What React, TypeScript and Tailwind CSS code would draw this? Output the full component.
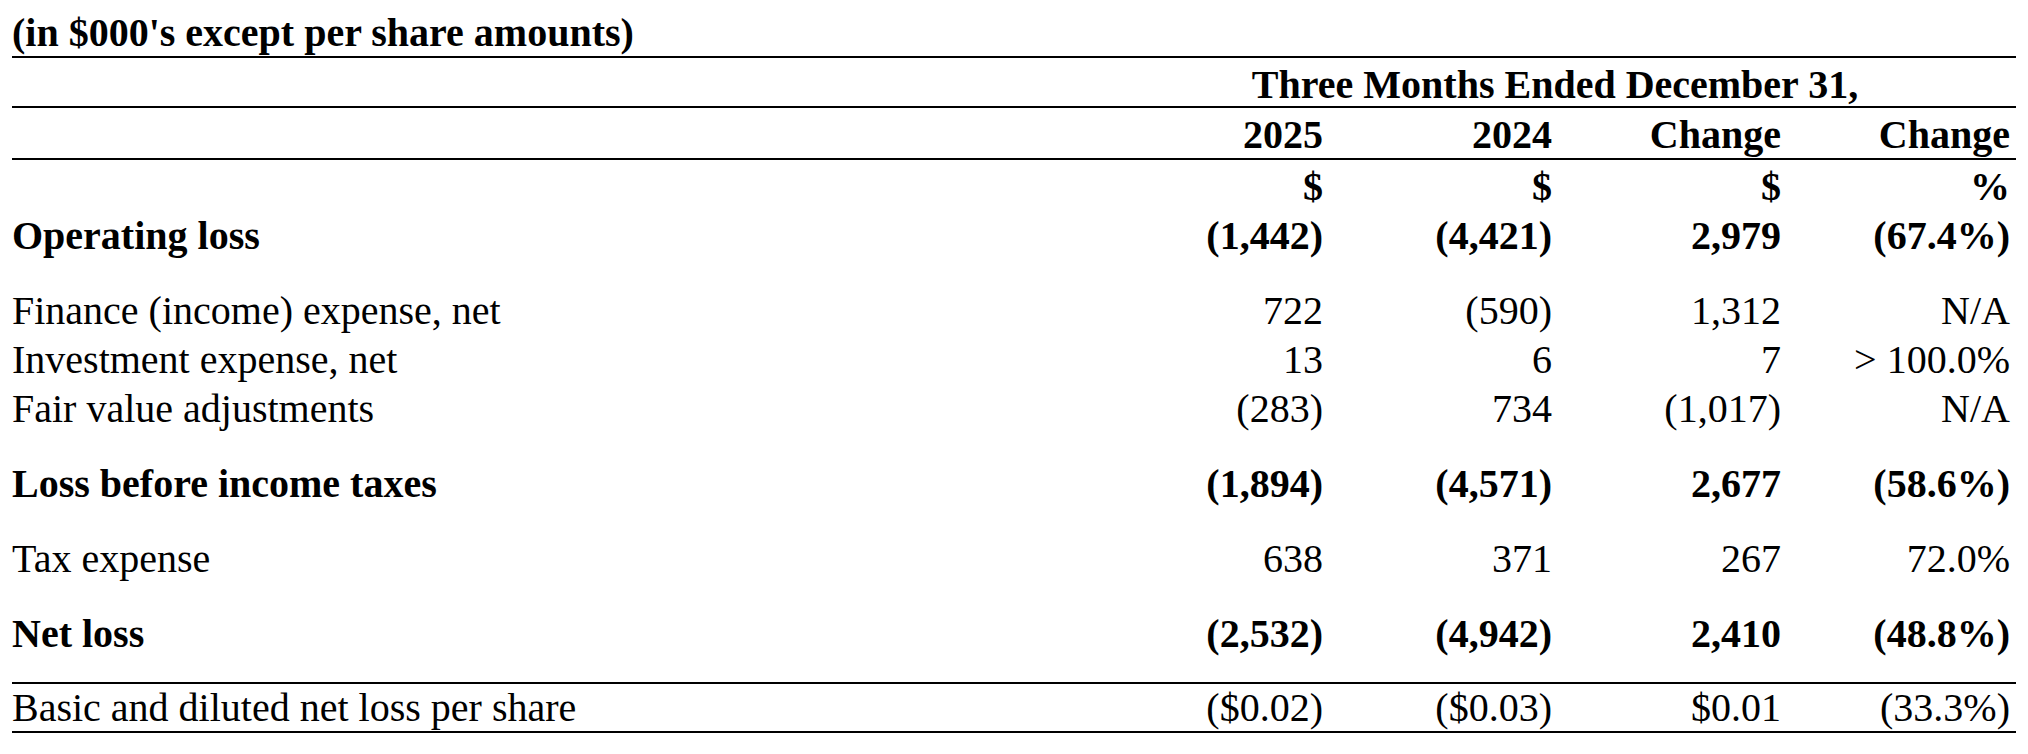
type Row = {
  label: string;
  values: string[];
  bold?: boolean;
  gapBefore?: boolean;
};

const rows: Row[] = [
  { label: "", values: ["$", "$", "$", "%"], bold: true },
  { label: "Operating loss", values: ["(1,442)", "(4,421)", "2,979", "(67.4%)"], bold: true },
  { label: "Finance (income) expense, net", values: ["722", "(590)", "1,312", "N/A"], gapBefore: true },
  { label: "Investment expense, net", values: ["13", "6", "7", "> 100.0%"] },
  { label: "Fair value adjustments", values: ["(283)", "734", "(1,017)", "N/A"] },
  { label: "Loss before income taxes", values: ["(1,894)", "(4,571)", "2,677", "(58.6%)"], bold: true, gapBefore: true },
  { label: "Tax expense", values: ["638", "371", "267", "72.0%"], gapBefore: true },
  { label: "Net loss", values: ["(2,532)", "(4,942)", "2,410", "(48.8%)"], bold: true, gapBefore: true },
];

function Line({ children, bold, className = "" }: { children: React.ReactNode; bold?: boolean; className?: string }) {
  return (
    <div className={`grid grid-cols-[1fr_229px_229px_229px_229px] pr-[6px] ${bold ? "font-bold" : ""} ${className}`}>
      {children}
    </div>
  );
}

export default function App() {
  return (
    <div className="w-[2028px] h-[754px] bg-white text-black px-[12px] pt-[10px] text-[40px] font-['Liberation_Serif','Times_New_Roman',serif]">
      {/* Title */}
      <div className="font-bold leading-[46px] border-b-2 border-black">(in $000's except per share amounts)</div>

      {/* Period header */}
      <div className="grid grid-cols-[1fr_922px] font-bold leading-[46px] pt-[2px] border-b-2 border-black">
        <div />
        <div className="text-center translate-y-[2px]">Three Months Ended December 31,</div>
      </div>

      {/* Column headers */}
      <Line bold className="leading-[46px] pt-[4px] border-b-2 border-black">
        <div />
        <div className="text-right">2025</div>
        <div className="text-right">2024</div>
        <div className="text-right">Change</div>
        <div className="text-right">Change</div>
      </Line>

      {/* Body */}
      <div className="pt-[2px]">
        {rows.map((r, i) => (
          <Line key={i} bold={r.bold} className={`leading-[49px] ${r.gapBefore ? "mt-[26px]" : ""}`}>
            <div>{r.label}</div>
            {r.values.map((v, j) => (
              <div key={j} className="text-right whitespace-pre">
                {v}
              </div>
            ))}
          </Line>
        ))}
      </div>

      {/* Per share */}
      <div className="mt-[24px] border-t-2 border-b-2 border-black">
        <Line className="leading-[47px]">
          <div>Basic and diluted net loss per share</div>
          <div className="text-right">($0.02)</div>
          <div className="text-right">($0.03)</div>
          <div className="text-right">$0.01</div>
          <div className="text-right">(33.3%)</div>
        </Line>
      </div>
    </div>
  );
}
